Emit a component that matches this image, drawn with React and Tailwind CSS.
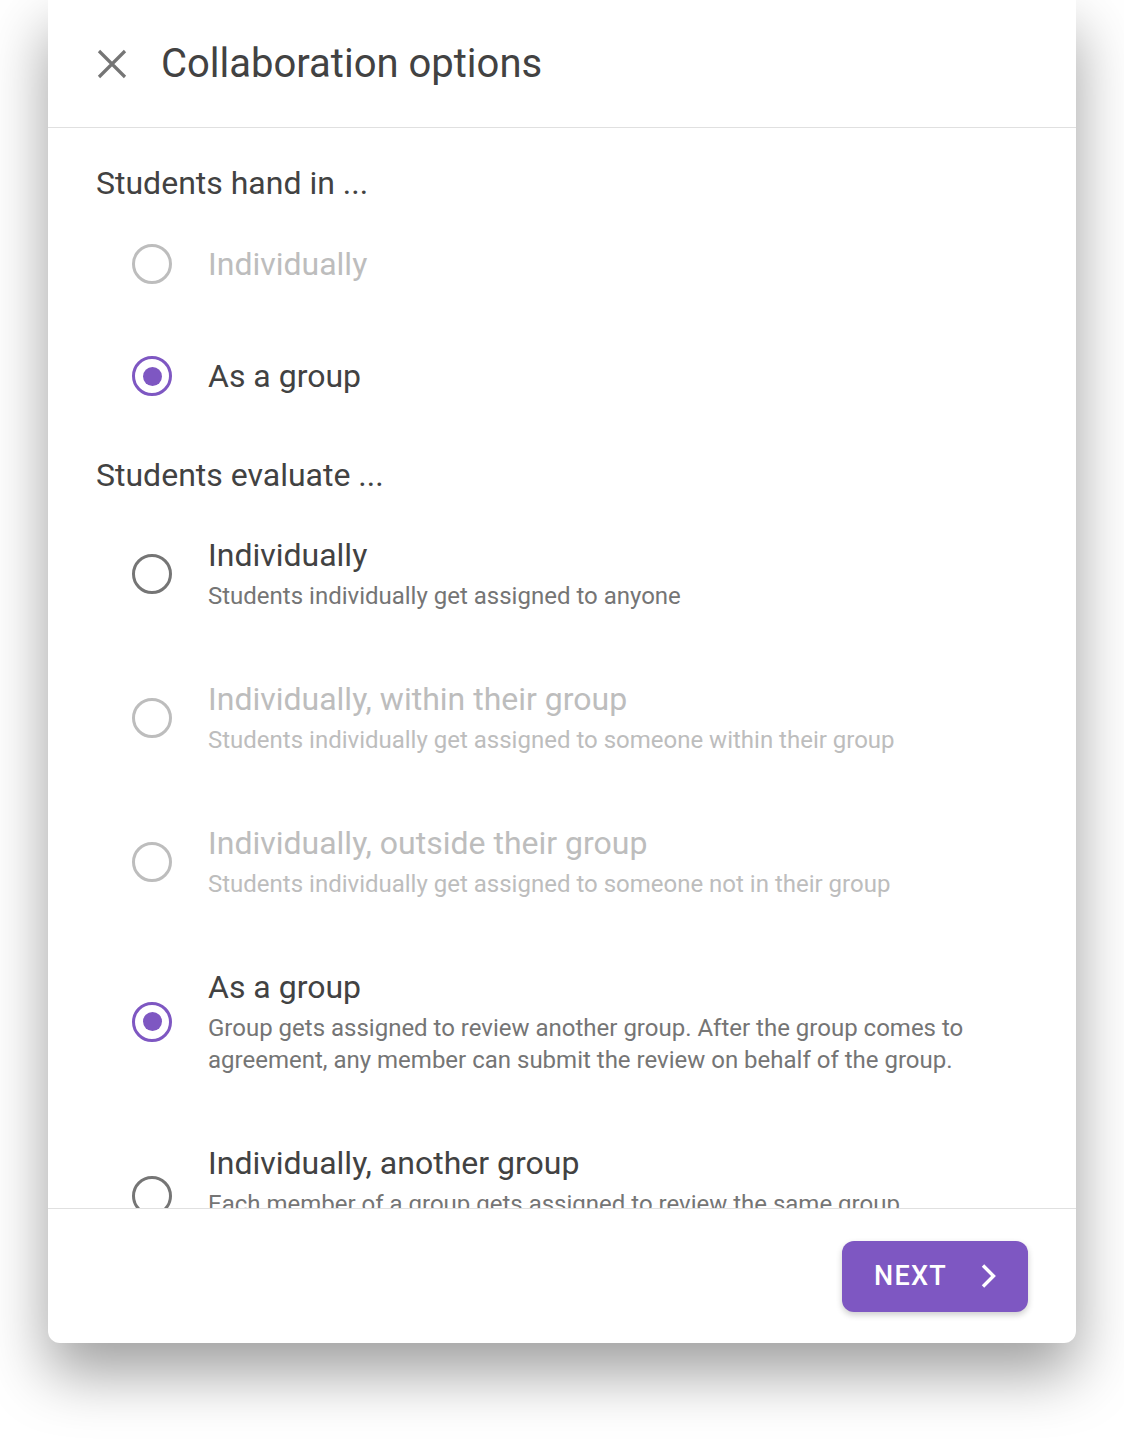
import React, { useState } from "react";

const Radio = ({ checked, disabled }) => {
    const ring = disabled ? "border-[#bdbdbd]" : checked ? "border-[#7e57c2]" : "border-[#757575]";
    return (
        <div className={`shrink-0 size-[40px] rounded-full border-[3.5px] ${ring} flex items-center justify-center`}>
            {checked && <div className="size-[19px] rounded-full bg-[#7e57c2]" />}
        </div>
    );
};

const SimpleOption = ({ label, checked, disabled }) => (
    <div className="h-[112px] flex items-center pl-[84px]">
        <Radio checked={checked} disabled={disabled} />
        <span className={`ml-[36px] text-[32px] leading-[40px] ${disabled ? "text-[#bdbdbd]" : "text-[#424242]"}`}>
            {label}
        </span>
    </div>
);

const DetailOption = ({ label, sub, checked, disabled, tall }) => (
    <div className="flex items-center pl-[84px] pt-[34px] pb-[33px]">
        <Radio checked={checked} disabled={disabled} />
        <div className="ml-[36px] pr-[50px]">
            <div className={`text-[32px] leading-[40px] ${disabled ? "text-[#bdbdbd]" : "text-[#424242]"}`}>{label}</div>
            <div
                className={`mt-[5px] text-[24px] leading-[32px] ${tall ? "min-h-[60px]" : ""} ${
                    disabled ? "text-[#bdbdbd]" : "text-[#757575]"
                }`}
            >
                {sub}
            </div>
        </div>
    </div>
);

export default function App() {
    const [handIn] = useState("group");
    const [evaluate] = useState("group");

    return (
        <div className="min-h-[1440px] bg-white px-[48px] font-['Roboto',sans-serif]">
            <div className="bg-white rounded-b-[12px] shadow-[0_30px_60px_rgba(0,0,0,0.38)] flex flex-col">
                {/* header */}
                <div className="h-[128px] border-b border-[#e0e0e0] flex items-center pl-[49px]">
                    <svg width="30" height="30" viewBox="0 0 30 30" className="shrink-0">
                        <path d="M2 2 L28 28 M28 2 L2 28" stroke="#757575" strokeWidth="3.2" fill="none" />
                    </svg>
                    <h1 className="ml-[34px] text-[40px] leading-[48px] text-[#424242]">Collaboration options</h1>
                </div>

                {/* scrolling body */}
                <div className="h-[1080px] overflow-hidden">
                    <div className="pt-[35px] pl-[48px] text-[32px] leading-[40px] text-[#424242]">Students hand in ...</div>
                    <div className="mt-[5px]">
                        <SimpleOption label="Individually" disabled checked={handIn === "individual"} />
                        <SimpleOption label="As a group" checked={handIn === "group"} />
                    </div>

                    <div className="mt-[23px] pl-[48px] text-[32px] leading-[40px] text-[#424242]">Students evaluate ...</div>
                    <div className="mt-[6px]">
                        <DetailOption
                            label="Individually"
                            sub="Students individually get assigned to anyone"
                            checked={evaluate === "individual"}
                        />
                        <DetailOption
                            label="Individually, within their group"
                            sub="Students individually get assigned to someone within their group"
                            disabled
                        />
                        <DetailOption
                            label="Individually, outside their group"
                            sub="Students individually get assigned to someone not in their group"
                            disabled
                        />
                        <DetailOption
                            label="As a group"
                            sub="Group gets assigned to review another group. After the group comes to agreement, any member can submit the review on behalf of the group."
                            checked={evaluate === "group"}
                        />
                        <DetailOption
                            label="Individually, another group"
                            sub="Each member of a group gets assigned to review the same group"
                            tall
                        />
                    </div>
                </div>

                {/* footer */}
                <div className="h-[135px] border-t border-[#e0e0e0] flex items-center justify-end pr-[48px]">
                    <button className="w-[186px] h-[71px] rounded-[12px] bg-[#7e57c2] shadow-[0_3px_6px_rgba(0,0,0,0.2)] flex items-center pl-[32px] text-white">
                        <span className="text-[27px] font-medium tracking-[1.3px]">NEXT</span>
                        <svg width="20" height="26" viewBox="0 0 20 26" className="ml-[32px]">
                            <path d="M4 2.5 L14.5 13 L4 23.5" stroke="white" strokeWidth="3.4" fill="none" />
                        </svg>
                    </button>
                </div>
            </div>
        </div>
    );
}
